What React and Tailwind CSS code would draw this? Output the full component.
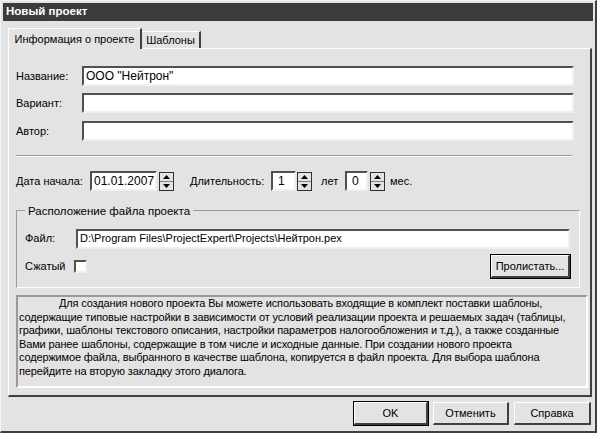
import React from "react";

const font = { fontFamily: '"Liberation Sans", Arial, sans-serif' };

const infoLines = [
  "Для создания нового проекта Вы можете использовать входящие в комплект поставки шаблоны,",
  "содержащие типовые настройки в зависимости от условий реализации проекта и решаемых задач (таблицы,",
  "графики, шаблоны текстового описания, настройки параметров налогообложения и т.д.), а также созданные",
  "Вами ранее шаблоны, содержащие в том числе и исходные данные. При создании нового проекта",
  "содержимое файла, выбранного в качестве шаблона, копируется в файл проекта. Для выбора шаблона",
  "перейдите на вторую закладку этого диалога.",
];

function Field({ className = "", children }) {
  return (
    <div
      className={
        "h-[20px] bg-white border-2 border-t-[#505050] border-l-[#505050] border-b-[#f0f0f0] border-r-[#f0f0f0] px-[2px] flex items-center text-[11px] leading-none text-black whitespace-nowrap overflow-hidden " +
        className
      }
    >
      {children}
    </div>
  );
}

function Spin() {
  return (
    <div className="w-[15px] h-[19px] border border-[#303030] bg-[#e3e3e3] flex flex-col">
      <div className="flex-1 flex items-center justify-center border-b border-[#808080]">
        <svg width="7" height="4" viewBox="0 0 7 4">
          <path d="M3.5 0 L7 4 L0 4 Z" fill="#000" />
        </svg>
      </div>
      <div className="flex-1 flex items-center justify-center">
        <svg width="7" height="4" viewBox="0 0 7 4">
          <path d="M0 0 L7 0 L3.5 4 Z" fill="#000" />
        </svg>
      </div>
    </div>
  );
}

function Button({ children, def, className = "" }) {
  return (
    <div
      className={
        "h-[23px] flex items-center justify-center text-[11px] text-black bg-[#e3e3e3] border-t border-l border-t-white border-l-white border-b-2 border-r-2 border-b-[#404040] border-r-[#404040] " +
        (def ? "outline outline-1 outline-black " : "") +
        className
      }
    >
      {children}
    </div>
  );
}

export default function App() {
  return (
    <div
      className="w-[597px] h-[433px] bg-[#e3e3e3] border-t border-l border-t-[#f4f4f4] border-l-[#f4f4f4] border-r-2 border-b-2 border-r-[#404040] border-b-[#404040] flex flex-col text-black text-[11px] overflow-hidden"
      style={font}
    >
      {/* Заголовок окна */}
      <div className="mx-[2px] mt-[2px] h-[18px] bg-[#3c3c3c] text-white font-bold text-[11.5px] pl-[3px] flex items-center">
        Новый проект
      </div>

      {/* Вкладки */}
      <div className="mt-[6px] pl-[7px] flex items-end h-[21px]">
        <div className="h-[21px] w-[134px] border-t border-l border-white border-r-2 border-r-[#404040] flex items-center justify-center bg-[#e3e3e3] relative z-10 -mb-[1px]">
          Информация о проекте
        </div>
        <div className="h-[17px] w-[59px] border-t border-white border-r-2 border-r-[#404040] flex items-center justify-center">
          Шаблоны
        </div>
      </div>

      {/* Панель вкладки */}
      <div className="ml-[7px] mr-[3px] h-[349px] border-t border-l border-white border-r-2 border-b-2 border-r-[#404040] border-b-[#404040] flex flex-col pl-[7px] pr-[1px]">
        <div className="mt-[17px] flex items-center h-[20px]">
          <div className="w-[66px]">Название:</div>
          <Field className="w-[492px] text-[12px]">ООО "Нейтрон"</Field>
        </div>
        <div className="mt-[7px] flex items-center h-[20px]">
          <div className="w-[66px]">Вариант:</div>
          <Field className="w-[492px]" />
        </div>
        <div className="mt-[8px] flex items-center h-[20px]">
          <div className="w-[66px]">Автор:</div>
          <Field className="w-[492px]" />
        </div>

        <div className="mt-[14px] w-[556px] border-t border-t-[#9a9a9a] border-b border-b-white" />

        <div className="mt-[14px] flex items-center h-[20px]">
          <div className="w-[74px]">Дата начала:</div>
          <Field className="w-[67px] text-[12px]">01.01.2007</Field>
          <div className="ml-[2px]">
            <Spin />
          </div>
          <div className="ml-[16px] w-[81px]">Длительность:</div>
          <Field className="w-[25px] text-[12px]">
            <span className="ml-[3px]">1</span>
          </Field>
          <div className="ml-[1px]">
            <Spin />
          </div>
          <div className="ml-[9px] w-[24px]">лет</div>
          <Field className="w-[23px] text-[12px]">
            <span className="ml-[3px]">0</span>
          </Field>
          <div className="ml-[2px]">
            <Spin />
          </div>
          <div className="ml-[5px]">мес.</div>
        </div>

        {/* Расположение файла проекта */}
        <div className="mt-[19px] w-[564px] h-[78px] border border-t-[#9a9a9a] border-l-[#9a9a9a] border-b-white border-r-white relative flex flex-col pl-[8px]">
          <div className="absolute -top-[8px] left-[8px] px-[3px] bg-[#e3e3e3] text-[11.5px]">
            Расположение файла проекта
          </div>
          <div className="mt-[18px] flex items-center h-[19px]">
            <div className="w-[51px]">Файл:</div>
            <Field className="w-[494px] h-[19px]">D:\Program Files\ProjectExpert\Projects\Нейтрон.pex</Field>
          </div>
          <div className="mt-[7px] flex items-center">
            <div className="w-[49px]">Сжатый</div>
            <div className="w-[13px] h-[13px] bg-white border-2 border-t-[#505050] border-l-[#505050] border-b-[#f0f0f0] border-r-[#f0f0f0]" />
            <Button def className="ml-[404px] w-[79px] h-[22px]">
              Пролистать...
            </Button>
          </div>
        </div>

        {/* Описание */}
        <div className="mt-[7px] w-[572px] h-[93px] border-2 border-t-[#9a9a9a] border-l-[#9a9a9a] border-b-white border-r-white px-[1px] text-[11px] leading-[13.5px] tracking-[-0.15px]">
          {infoLines.map((line, i) => (
            <div key={i} className={"whitespace-nowrap " + (i === 0 ? "pl-[40px]" : "")}>
              {line}
            </div>
          ))}
        </div>
      </div>

      {/* Кнопки */}
      <div className="mt-[5px] flex justify-end pr-[4px] gap-[5px]">
        <Button def className="w-[74px]">OK</Button>
        <Button className="w-[76px]">Отменить</Button>
        <Button className="w-[77px]">Справка</Button>
      </div>
    </div>
  );
}
